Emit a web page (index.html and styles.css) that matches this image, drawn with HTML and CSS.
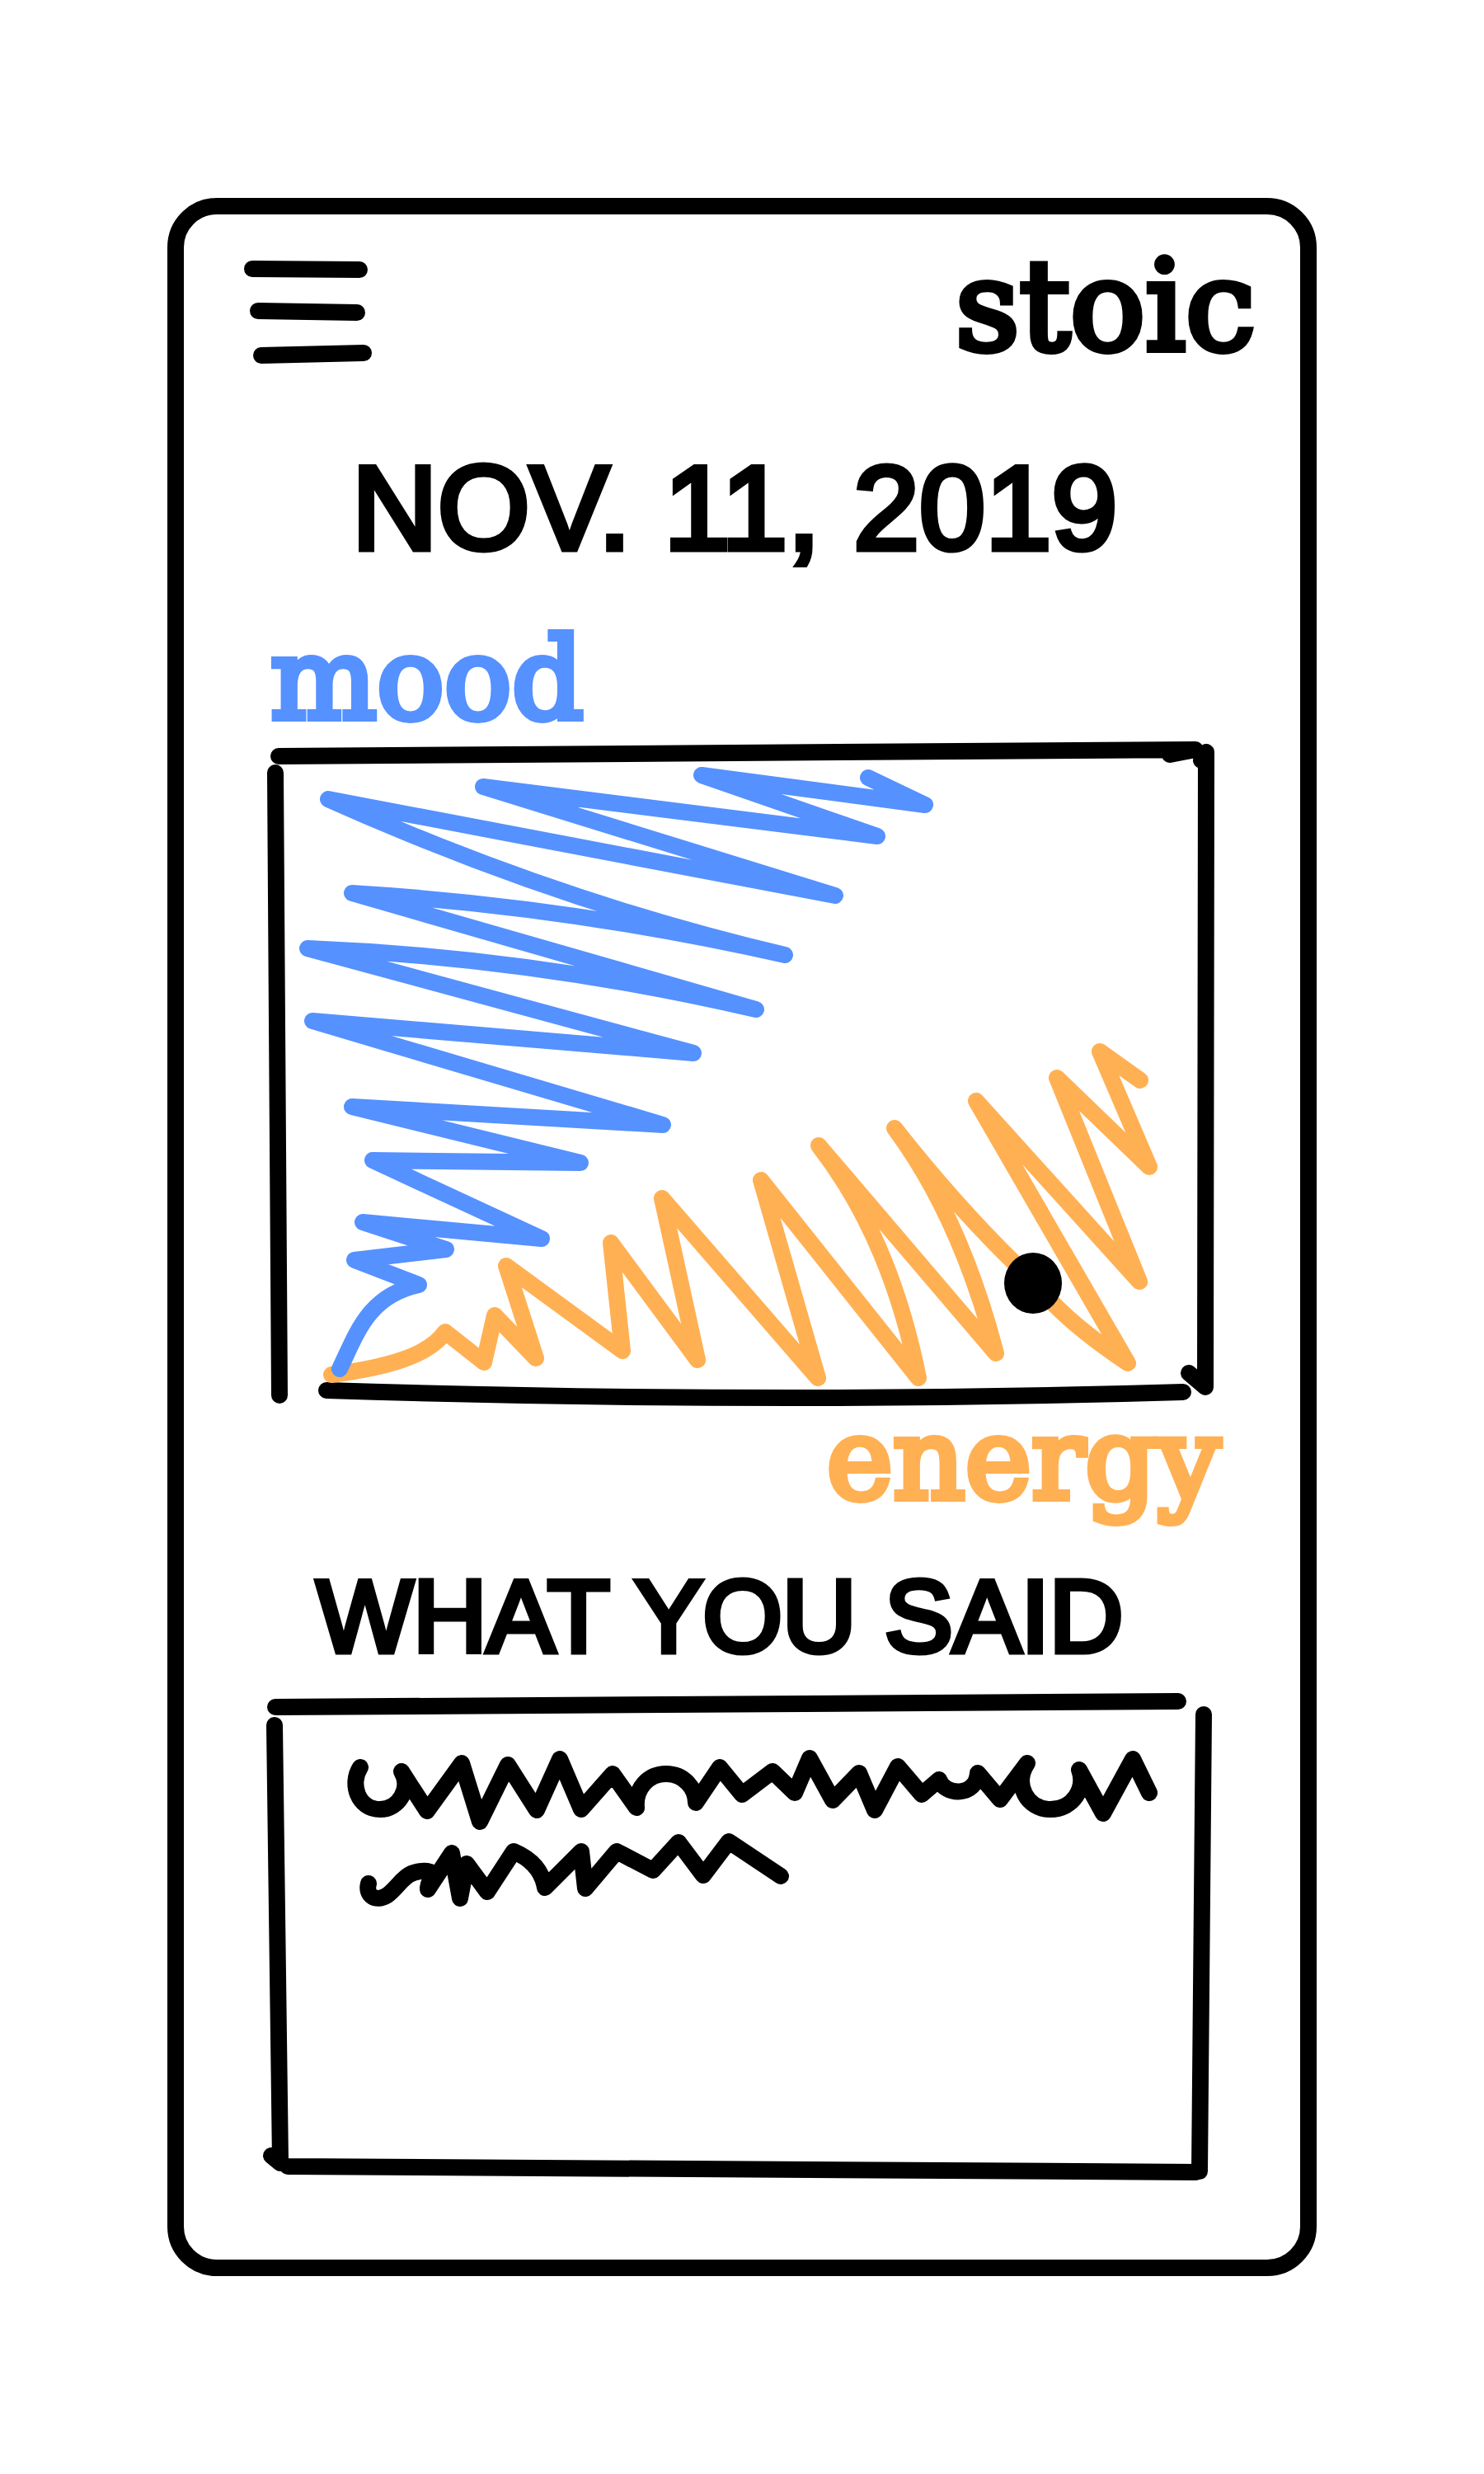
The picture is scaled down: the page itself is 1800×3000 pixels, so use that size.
FILE: index.html
```html
<!DOCTYPE html>
<html lang="en">
<head>
<meta charset="utf-8">
<meta name="viewport" content="width=device-width, initial-scale=1">
<title>stoic</title>
<link rel="stylesheet" href="styles.css">
</head>
<body>
<main class="screen">
  <header class="topbar">
    <button class="menu" type="button" aria-label="Menu">
      <svg class="sketch" viewBox="296 317 155 126" width="155" height="126" aria-hidden="true">
        <path d="M306 327L436 328M313 378L433 380M317 432L441 429"/>
      </svg>
    </button>
    <div class="brand">stoic</div>
  </header>

  <h1 class="date">NOV. 11, 2019</h1>

  <section class="chart">
    <div class="axis axis-mood">mood</div>
    <svg class="sketch" viewBox="320 894 1160 815" role="img" aria-label="Mood against energy">
      <path d="M338 916L1450 908L1419 914M1457 921L1463 911L1462 1681L1442 1664M334 936L339 1691M396 1685Q940 1702 1435 1687"/>
      <path class="energy-line" d="M402 1666C470 1657 520 1643 540 1614L587 1651L600 1594L650 1646L614 1534L755 1637L741 1506L846 1648L803 1452L992 1670L923 1430L1114 1670Q1080 1500 993 1388L1208 1640Q1165 1475 1085 1367Q1170 1475 1256 1555Q1290 1600 1368 1652L1184 1334L1382 1553L1282 1306L1394 1414L1334 1274L1383 1309"/>
      <path class="mood-line" d="M412 1659C433 1615 447 1570 508 1557L430 1527L541 1514L440 1481L657 1501L452 1406L704 1409L427 1341L804 1363L379 1237L841 1276L373 1149Q645 1160 917 1223L427 1082Q690 1098 952 1157Q675 1092 398 968L1013 1085L586 953L1064 1013L851 939L1122 975L1053 942"/>
      <ellipse class="dot" cx="1253" cy="1555" rx="35" ry="37"/>
    </svg>
    <div class="axis axis-energy">energy</div>
  </section>

  <section class="entry">
    <h2 class="entry-title">WHAT YOU SAID</h2>
    <svg class="sketch" viewBox="320 2052 1160 592" role="img" aria-label="Journal entry">
      <path d="M334 2069L1429 2062M333 2091L340 2620L329 2613L340 2622M349 2626L1451 2633M1460 2078L1455 2632"/>
      <path d="M437 2142C424 2162 434 2193 461 2193C484 2193 499 2167 487 2147L518 2195L560 2137L582 2208L616 2139L651 2194L679 2132L705 2193L743 2150L772 2191C770 2168 786 2150 808 2150C830 2150 844 2168 844 2185L873 2142L900 2175L937 2147L964 2173L982 2131L1010 2182L1042 2149L1061 2194L1089 2141L1118 2175L1139 2157C1146 2177 1184 2178 1186 2149L1213 2181L1246 2137C1229 2163 1246 2193 1274 2193C1302 2193 1317 2167 1309 2145L1338 2198L1374 2132L1394 2173"/>
      <path d="M447 2283C443 2298 456 2306 470 2297C486 2285 491 2266 518 2268C532 2270 518 2279 519 2290L548 2246L558 2301L566 2259L591 2293L623 2244Q656 2258 661 2288L705 2244L710 2289L748 2244L792 2267L823 2233L853 2273L884 2232L947 2274"/>
    </svg>
  </section>
</main>
</body>
</html>
```
FILE: styles.css
```css
* {
  box-sizing: border-box;
}

body {
  margin: 0;
  padding: 240px 203px;
  background: #fff;
  color: #000;
  font-family: "Liberation Sans", Arial, sans-serif;
}

.screen {
  border: 20px solid #000;
  border-radius: 60px;
  padding: 22px 0 95px;
}

.topbar {
  display: flex;
  justify-content: space-between;
  align-items: flex-end;
  padding: 0 54px 0 73px;
}

.menu {
  padding: 0 0 20px;
  border: 0;
  background: none;
  cursor: pointer;
}

.sketch {
  display: block;
  overflow: visible;
  fill: none;
  stroke: #000;
  stroke-width: 20px;
  stroke-linecap: round;
  stroke-linejoin: round;
}

.brand,
.axis {
  font-family: "DejaVu Serif", serif;
  -webkit-text-stroke: 8px currentColor;
}

.brand {
  font-size: 152px;
  line-height: 180px;
}

.date,
.entry-title {
  margin: 0;
  font-weight: 400;
  -webkit-text-stroke: 7px currentColor;
}

.date {
  margin-top: 85px;
  padding-right: 18px;
  font-size: 144px;
  line-height: 140px;
  text-align: center;
}

.chart,
.entry {
  padding: 0 97px;
}

.chart {
  margin-top: 77px;
}

.chart .sketch,
.entry .sketch {
  width: 100%;
  height: auto;
}

.axis {
  font-size: 136px;
  line-height: 120px;
}

.axis-mood {
  margin-bottom: 11px;
  padding-left: 8px;
  color: #5591ff;
}

.axis-energy {
  color: #ffb053;
  text-align: right;
}

.mood-line {
  stroke: #5591ff;
}

.energy-line {
  stroke: #ffb053;
}

.dot {
  fill: #000;
  stroke: none;
}

.entry {
  margin-top: 70px;
}

.entry-title {
  margin-bottom: 33px;
  padding-left: 64px;
  font-size: 124px;
  line-height: 120px;
}
```
